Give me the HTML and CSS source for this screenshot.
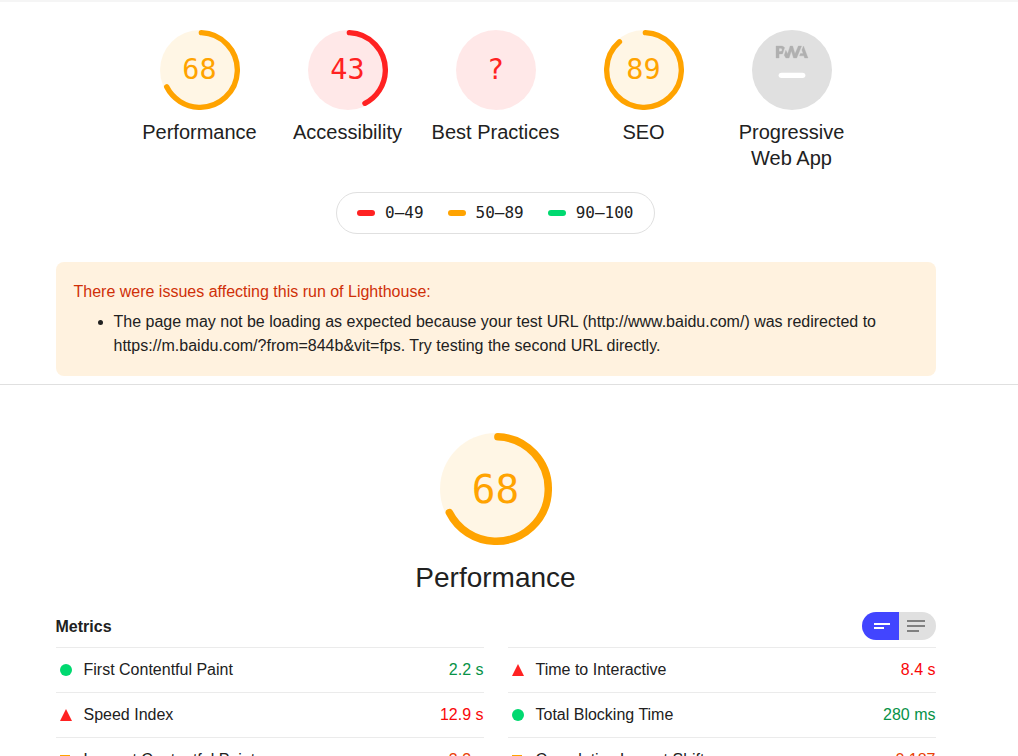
FILE: index.html
```html
<!DOCTYPE html>
<html lang="en">
<head>
<meta charset="utf-8">
<title>Lighthouse Report</title>
<link rel="stylesheet" href="styles.css">
</head>
<body>
<main class="report">
  <header class="summary">
    <div class="scores">
      <div class="gauge average">
        <div class="dial">
          <svg viewBox="0 0 120 120"><circle class="base" cx="60" cy="60" r="60"/><circle class="arc" cx="60" cy="60" r="56" stroke-dasharray="235.3 352" transform="rotate(-87.95 60 60)"/></svg>
          <span class="score">68</span>
        </div>
        <div class="label">Performance</div>
      </div>
      <div class="gauge fail">
        <div class="dial">
          <svg viewBox="0 0 120 120"><circle class="base" cx="60" cy="60" r="60"/><circle class="arc" cx="60" cy="60" r="56" stroke-dasharray="147.3 352" transform="rotate(-87.95 60 60)"/></svg>
          <span class="score">43</span>
        </div>
        <div class="label">Accessibility</div>
      </div>
      <div class="gauge fail">
        <div class="dial">
          <svg viewBox="0 0 120 120"><circle class="base" cx="60" cy="60" r="60"/></svg>
          <span class="score">?</span>
        </div>
        <div class="label">Best Practices</div>
      </div>
      <div class="gauge average">
        <div class="dial">
          <svg viewBox="0 0 120 120"><circle class="base" cx="60" cy="60" r="60"/><circle class="arc" cx="60" cy="60" r="56" stroke-dasharray="309.2 352" transform="rotate(-87.95 60 60)"/></svg>
          <span class="score">89</span>
        </div>
        <div class="label">SEO</div>
      </div>
      <div class="gauge">
        <div class="dial">
          <svg viewBox="0 0 60 60">
            <circle cx="30" cy="30" r="30" fill="#e0e0e0"/>
            <g fill="#b0b0b0" stroke="#b0b0b0" stroke-width=".25">
              <path d="M35.66 19.39l.7-1.75h2L37.4 15 38.6 12l3.4 9h-2.51l-.58-1.61z"/>
              <path d="M33.52 21l3.65-9h-2.42l-2.5 5.82L30.5 12h-1.86l-1.9 5.82-1.35-2.65-1.21 3.72L25.4 21h2.38l1.72-5.2 1.64 5.2z"/>
              <path fill-rule="evenodd" d="M20.3 17.91h1.48c.45 0 .85-.05 1.2-.15l.39-1.18 1.07-3.3a2.64 2.64 0 0 0-.28-.37c-.55-.6-1.36-.91-2.42-.91H18v9h2.3V17.9zm1.96-3.84c.22.22.33.5.33.87 0 .36-.1.65-.29.87-.2.23-.59.35-1.15.35h-.86v-2.41h.87c.52 0 .89.1 1.1.32z"/>
            </g>
            <rect x="20" y="32" width="20" height="4" rx="2" fill="#fff"/>
          </svg>
        </div>
        <div class="label">Progressive Web App</div>
      </div>
    </div>
    <div class="scale">
      <span class="range fail">0–49</span>
      <span class="range average">50–89</span>
      <span class="range pass">90–100</span>
    </div>
    <section class="warnings">
      <p>There were issues affecting this run of Lighthouse:</p>
      <ul>
        <li>The page may not be loading as expected because your test URL (http://www.baidu.com/) was redirected to https://m.baidu.com/?from=844b&amp;vit=fps. Try testing the second URL directly.</li>
      </ul>
    </section>
  </header>
  <section class="category">
    <div class="gauge large average">
      <div class="dial">
        <svg viewBox="0 0 120 120"><circle class="base" cx="60" cy="60" r="60"/><circle class="arc" cx="60" cy="60" r="56" stroke-dasharray="235.3 352" transform="rotate(-87.95 60 60)"/></svg>
        <span class="score">68</span>
      </div>
      <div class="label">Performance</div>
    </div>
    <div class="metrics-head">
      <h2>Metrics</h2>
      <div class="toggle">
        <span class="on"><svg width="24" height="24"><path d="M4 9h16v2H4zM4 13h10v2H4z"/></svg></span>
        <span class="off"><svg width="24" height="24"><path d="M3 6h18v2H3zM3 11h18v2H3zM3 16h12v2H3z"/></svg></span>
      </div>
    </div>
    <div class="metrics">
      <div class="metric pass"><svg class="mark" viewBox="0 0 12 12"><circle cx="6" cy="6" r="6"/></svg><span>First Contentful Paint</span><b>2.2 s</b></div>
      <div class="metric fail"><svg class="mark" viewBox="0 0 12 12"><path d="M6 0l6 12H0z"/></svg><span>Time to Interactive</span><b>8.4 s</b></div>
      <div class="metric fail"><svg class="mark" viewBox="0 0 12 12"><path d="M6 0l6 12H0z"/></svg><span>Speed Index</span><b>12.9 s</b></div>
      <div class="metric pass"><svg class="mark" viewBox="0 0 12 12"><circle cx="6" cy="6" r="6"/></svg><span>Total Blocking Time</span><b>280 ms</b></div>
      <div class="metric average"><svg class="mark square" viewBox="0 0 10 10"><path d="M0 0h10v10H0z"/></svg><span>Largest Contentful Paint</span><b>3.3 s</b></div>
      <div class="metric average"><svg class="mark square" viewBox="0 0 10 10"><path d="M0 0h10v10H0z"/></svg><span>Cumulative Layout Shift</span><b>0.187</b></div>
    </div>
  </section>
</main>
</body>
</html>
```
FILE: styles.css
```css
* { box-sizing: border-box; }
html { overflow: hidden; }
body {
  margin: 0;
  height: 756px;
  overflow: hidden;
  background: #fff;
  color: #212121;
  font: 16px/24px "Liberation Sans", Arial, sans-serif;
}
.pass { --mark: #00d970; --ink: #079247; }
.average { --mark: #ffa300; --ink: #e93f08; }
.fail { --mark: #ff2222; --ink: #f90709; }

.report { border-top: 2px solid #f5f5f5; }
.summary {
  height: 383px;
  padding: 28px 82px 0 56px;
  border-bottom: 1px solid #e0e0e0;
}
.scores { display: flex; justify-content: center; height: 162px; }
.gauge {
  display: flex;
  flex-direction: column;
  align-items: center;
  width: 148px;
}
.dial {
  display: grid;
  place-items: center;
  width: 80px;
  height: 80px;
}
.dial > * { grid-area: 1 / 1; }
.dial svg { display: block; width: 100%; height: 100%; }
.base { fill: var(--mark); opacity: .1; }
.arc { fill: none; stroke: var(--mark); stroke-width: 8; stroke-linecap: round; }
.score {
  margin-right: 1px;
  color: var(--mark);
  font: 28.5px/1 "DejaVu Sans Mono", monospace;
}
.label {
  width: 128px;
  margin-top: 9px;
  margin-right: 1px;
  font-size: 20px;
  line-height: 26px;
  text-align: center;
  white-space: normal;
}
.scale {
  display: flex;
  gap: 24px;
  width: 319px;
  height: 42px;
  margin: 0 auto 0 280px;
  padding: 0 20px;
  align-items: center;
  border: 1px solid #e0e0e0;
  border-radius: 21px;
  font-family: "DejaVu Sans Mono", monospace;
}
.range { display: flex; align-items: center; gap: 10px; white-space: nowrap; }
.range::before {
  content: "";
  width: 18px;
  height: 6px;
  border-radius: 3px;
  background: var(--mark);
}
.warnings {
  height: 114px;
  margin-top: 28px;
  padding: 18px 18px 18px 17.5px;
  border-radius: 8px;
  background: #fff2df;
}
.warnings p { margin: 0 0 6px; color: #cf3008; }
.warnings ul { margin: 0; padding-left: 40px; }

.category { padding: 48px 82px 0 56px; }
.large { width: auto; }
.large .dial { width: 112px; height: 112px; }
.large .score { margin-top: 2px; font-size: 39.4px; }
.large .label { width: auto; margin-top: 15px; font-size: 28px; line-height: 36px; }
.metrics-head {
  display: flex;
  justify-content: space-between;
  height: 35px;
  margin-top: 16px;
}
.metrics-head h2 { margin: 3px 0 0 -.5px; font-size: 16px; line-height: 24px; }
.toggle { display: flex; width: 74px; height: 28px; overflow: hidden; border-radius: 14px; }
.toggle span { display: flex; width: 37px; align-items: center; }
.on { padding-left: 8px; background: #4245ff; fill: #fff; }
.off { padding-left: 5px; background: #e0e0e0; fill: #808080; }
.metrics { display: grid; grid-template-columns: 1fr 1fr; column-gap: 24px; }
.metric {
  display: flex;
  align-items: center;
  height: 45px;
  padding: 0 .5px 0 4px;
  border-top: 1px solid #ebebeb;
}
.mark { width: 12px; height: 12px; margin-right: 11.5px; fill: var(--mark); }
.square { width: 10px; height: 10px; margin-right: 13.5px; }
.metric b { margin-left: auto; color: var(--ink); font-weight: 400; }
```
